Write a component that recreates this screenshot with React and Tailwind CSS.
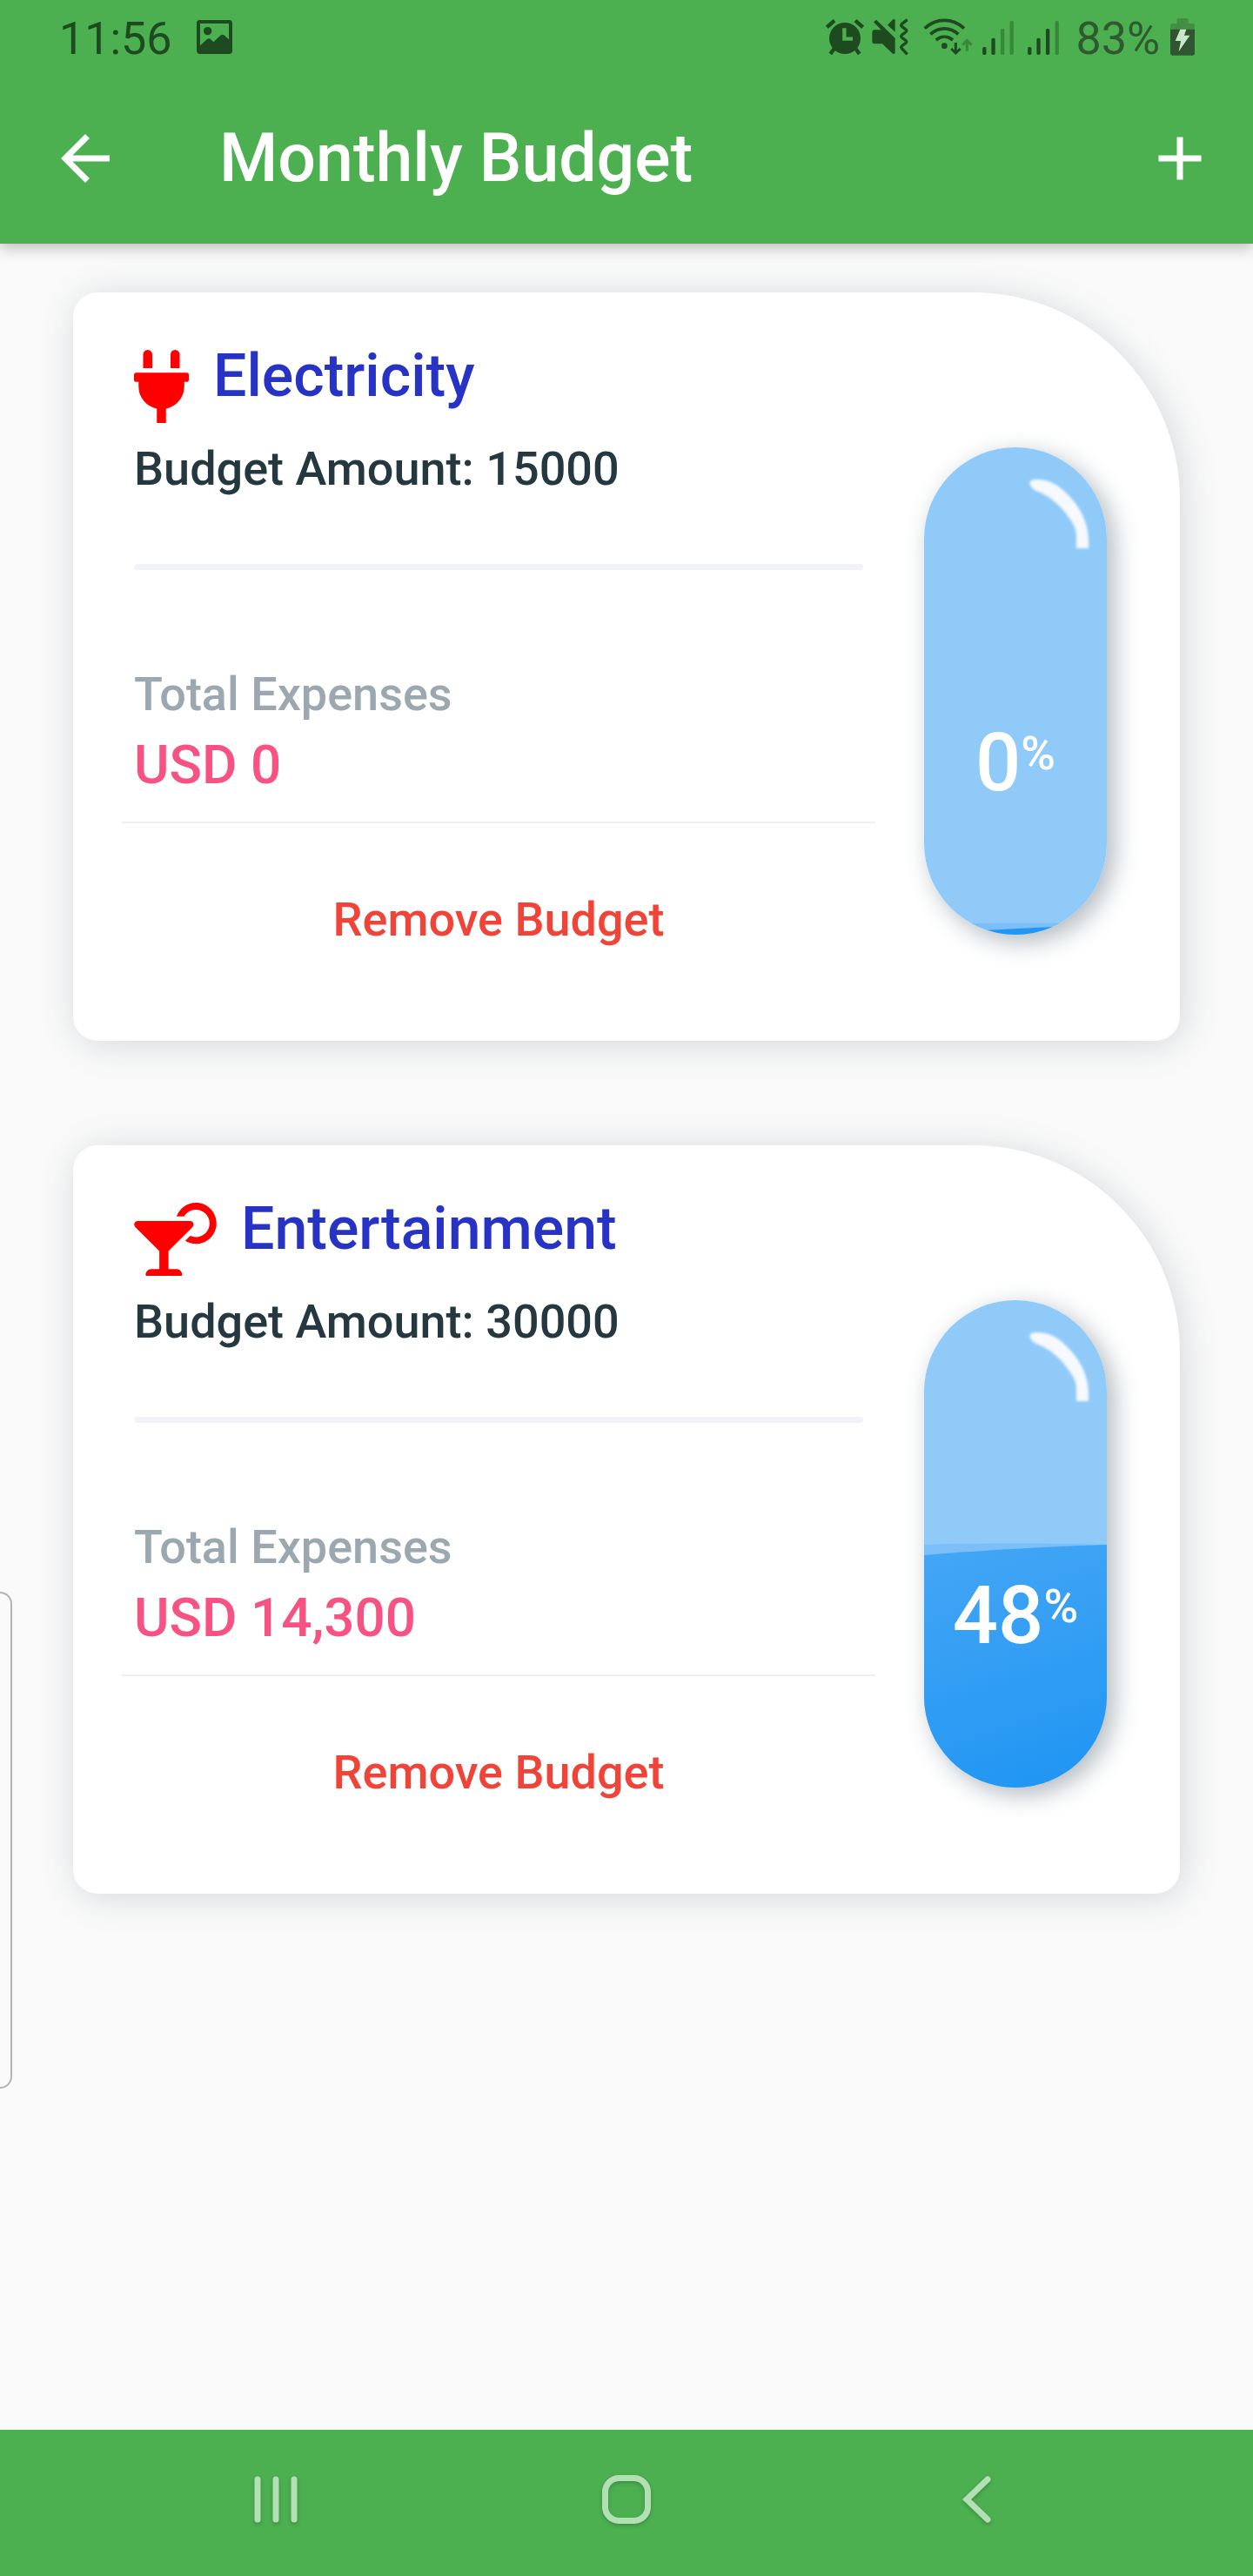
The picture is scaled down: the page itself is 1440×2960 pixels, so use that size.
import React from "react";
import { FaPlug, FaCocktail } from "react-icons/fa";
import { MdArrowBack, MdAdd } from "react-icons/md";

const budgets = [
  { name: "Electricity", Icon: FaPlug, iconWidth: "w-[63px]", amount: "15000", spent: "USD 0", percent: 0, back: "M0 549C50 546 150 546 210 548V560H0Z", front: "M0 560C60 555 140 551 210 549V560Z" },
  { name: "Entertainment", Icon: FaCocktail, iconWidth: "w-[95px]", amount: "30000", spent: "USD 14,300", percent: 48, back: "M0 281C60 279 150 279 210 281V560H0Z", front: "M0 293C60 288 140 283 210 281V560H0Z" },
];

function SignalBars({ strength }) {
  const bars = [
    [0, 91, 27],
    [31, 60, 58],
    [63, 27, 91],
    [95, 0, 118],
  ];
  return (
    <svg viewBox="0 0 108 118" className="h-[39px] w-9" aria-hidden="true">
      {bars.map(([x, y, h], i) => (
        <rect key={x} x={x} y={y} width="13" height={h} rx="5" fill={i < strength ? "#1e4a20" : "#38883b"} />
      ))}
    </svg>
  );
}

function StatusBar() {
  return (
    <div className="flex h-[84px] items-start pt-[21px] pr-[67px] pl-[68px] text-[52px] leading-[42px] text-[#1e4a20]">
      <span className="mt-[3px]">11:56</span>
      <svg viewBox="0 0 123 117" className="mt-[2px] ml-7 h-[39px] w-[41px]" aria-hidden="true">
        <rect x="6" y="6" width="111" height="105" rx="5" fill="none" stroke="#1e4a20" strokeWidth="12" />
        <circle cx="38" cy="38" r="14" fill="#1e4a20" />
        <path d="M10 90L36 66Q42 62 48 66L58 76L82 53Q89 47 96 53L114 70V112H10Z" fill="#1e4a20" />
      </svg>
      <div className="ml-auto flex items-start">
        <svg viewBox="54 63 132 129" className="h-[43px] w-11" fill="none" stroke="#1e4a20" aria-hidden="true">
          <circle cx="120" cy="132" r="54" fill="#1e4a20" stroke="none" />
          <path d="M118 97V134H147" stroke="#4caf50" strokeWidth="13" />
          <path d="M58 94L84 71M182 94L156 71M85 165L70 186M155 165L170 186" strokeWidth="13" />
        </svg>
        <svg viewBox="214 63 129 129" className="ml-[9px] h-[43px] w-[43px]" fill="#1e4a20" aria-hidden="true">
          <path d="M220 76L229 68L294 131V180Q294 189 286 185L250 151H222Q215 151 215 144V110Q215 103 222 103H246Z" />
          <path d="M268 86L287 67Q293 64 294 70V110Z" />
          <path d="M336 68L318 82Q312 87 318 92L330 101Q337 106 330 111L318 120Q312 125 318 130L330 139Q337 144 330 149L318 158Q312 163 318 168L336 187" fill="none" stroke="#1e4a20" strokeWidth="10" />
        </svg>
        <svg viewBox="390 63 171 129" className="ml-4 h-[43px] w-[57px]" fill="none" stroke="#1e4a20" strokeWidth="11" aria-hidden="true">
          <path d="M395 98C434 61 492 61 531 98M415 118C443 92 483 92 511 118M434 138C452 123 474 123 492 138" />
          <circle cx="463" cy="158" r="10" fill="#1e4a20" stroke="none" />
          <path d="M502 147V182M487 168L502 183L518 168" strokeWidth="9" />
          <path d="M541 176V140M526 155L541 139L557 155" stroke="#38883b" strokeWidth="9" />
        </svg>
        <div className="mt-[3px] ml-[11px] flex gap-4">
          <SignalBars strength={2} />
          <SignalBars strength={3} />
        </div>
        <span className="mt-[3px] ml-[19px] text-[#2f592f]">83%</span>
        <svg viewBox="1245 63 84 129" className="ml-3 h-[43px] w-7" aria-hidden="true">
          <path d="M1268 68Q1268 63 1273 63H1302Q1307 63 1307 68V81H1321Q1329 81 1329 89V101H1245V89Q1245 81 1253 81H1268Z" fill="#418f43" />
          <path d="M1245 101H1329V184Q1329 191 1322 191H1252Q1245 191 1245 184Z" fill="#315431" />
          <path d="M1279 101H1300L1293 122H1312L1274 178L1281 141H1262Z" fill="#c8e6c9" />
        </svg>
      </div>
    </div>
  );
}

function Gauge({ percent, back, front }) {
  const id = `water-${percent}`;
  return (
    <div className="relative mt-[178px] h-[560px] w-[210px] shrink-0 rounded-full shadow-[8px_8px_28px_rgba(58,81,96,0.4)]">
      <svg viewBox="0 0 210 560" className="h-full w-full rounded-full bg-[#90caf9]" aria-hidden="true">
        <defs>
          <linearGradient id={id} x1="0.35" y1="0" x2="0.6" y2="1">
            <stop offset="0" stopColor={percent ? "#42a5f5" : "#2196f3"} />
            <stop offset="1" stopColor="#2196f3" />
          </linearGradient>
          <filter id={`${id}-soft`}>
            <feGaussianBlur stdDeviation="1.5" />
          </filter>
        </defs>
        <path d={back} fill="#7bbef8" />
        <path d={front} fill={`url(#${id})`} />
        <path
          d="M123 45C119 40 123 37 128 37C140 37 148 40 156 46C175 61 189 83 189 107V116H175V102C175 95 173 90 168 83C157 66 144 56 131 51C127 49 125 48 123 45Z"
          fill="#f6f9fe"
          filter={`url(#${id}-soft)`}
        />
      </svg>
      <div className="absolute inset-x-0 bottom-[143px] flex items-start justify-center font-medium text-white">
        <span className="text-[92px] leading-[108px]">{percent}</span>
        <span className="mt-[11px] text-[54px] leading-[64px]">%</span>
      </div>
    </div>
  );
}

function BudgetCard({ name, Icon, iconWidth, amount, spent, percent, back, front }) {
  return (
    <article className="flex gap-14 rounded-[28px] rounded-tr-[238px] bg-white pr-[84px] pb-[107px] pl-14 font-medium shadow-[4px_4px_41px_rgba(58,81,96,0.2)]">
      <div className="min-w-0 flex-1 pt-14">
        <div className="px-3.5">
          <div className="flex items-start gap-7">
            <Icon className={`mt-2.5 h-[84px] ${iconWidth} text-[#ff0000]`} aria-hidden="true" />
            <h2 className="text-[68px] leading-[80px] text-[#2633c5]">{name}</h2>
          </div>
          <p className="mt-[21px] text-[54px] leading-[64px] text-[#253840]">Budget Amount: {amount}</p>
          <div className="mt-[77px] h-[7px] rounded bg-[#f2f3f8]" />
          <p className="mt-[111px] text-[54px] leading-[64px] text-[#9ba8af]">Total Expenses</p>
          <p className="mt-[13px] text-[62px] leading-[72px] text-[#f65283]">{spent}</p>
        </div>
        <hr className="mt-[29px] border-t-2 border-[#efefef]" />
        <div className="mt-[79px] flex justify-center">
          <button type="button" className="text-[54px] leading-[64px] text-[#f04438]">Remove Budget</button>
        </div>
      </div>
      <Gauge percent={percent} back={back} front={front} />
    </article>
  );
}

export default function App() {
  return (
    <div className="relative flex min-h-screen flex-col bg-[#fafafa] font-['Roboto',sans-serif]">
      <header className="relative z-10 bg-[#4caf50] shadow-[0_5px_16px_rgba(0,0,0,0.25)]">
        <StatusBar />
        <div className="flex h-[196px] items-center pr-[42px] pl-14 text-white">
          <button type="button" aria-label="Back">
            <MdArrowBack className="size-[84px]" />
          </button>
          <h1 className="ml-28 text-[77px] leading-[92px] font-medium">Monthly Budget</h1>
          <button type="button" aria-label="Add budget" className="ml-auto">
            <MdAdd className="size-[84px]" />
          </button>
        </div>
      </header>

      <main className="flex flex-1 flex-col gap-[120px] px-[84px] pt-14 pb-14">
        {budgets.map((b) => (
          <BudgetCard key={b.name} {...b} />
        ))}
      </main>

      <div className="absolute top-[1829px] left-0 h-[571px] w-3.5 rounded-r-[14px] border-2 border-l-0 border-[#b4b4b4]" />

      <nav className="grid h-[168px] grid-cols-3 bg-[#4caf50] px-[116px] pb-2">
        <button type="button" aria-label="Recent apps" className="flex items-center justify-center">
          <svg viewBox="0 0 56 56" className="size-14 drop-shadow-[0_2px_2px_rgba(0,0,0,0.2)]" stroke="#b2dfb4" strokeWidth="7" strokeLinecap="round" aria-hidden="true">
            <path d="M7 5V51M28 5V51M49 5V51" />
          </svg>
        </button>
        <button type="button" aria-label="Home" className="flex items-center justify-center">
          <svg viewBox="0 0 56 56" className="size-14 drop-shadow-[0_2px_2px_rgba(0,0,0,0.2)]" fill="none" stroke="#b2dfb4" strokeWidth="7" aria-hidden="true">
            <rect x="3.5" y="3.5" width="49" height="49" rx="16" />
          </svg>
        </button>
        <button type="button" aria-label="Go back" className="flex items-center justify-center">
          <svg viewBox="0 0 56 56" className="size-14 drop-shadow-[0_2px_2px_rgba(0,0,0,0.2)]" fill="none" stroke="#b2dfb4" strokeWidth="7" strokeLinecap="round" aria-hidden="true">
            <path d="M40 5L16 28L40 51" />
          </svg>
        </button>
      </nav>
    </div>
  );
}
